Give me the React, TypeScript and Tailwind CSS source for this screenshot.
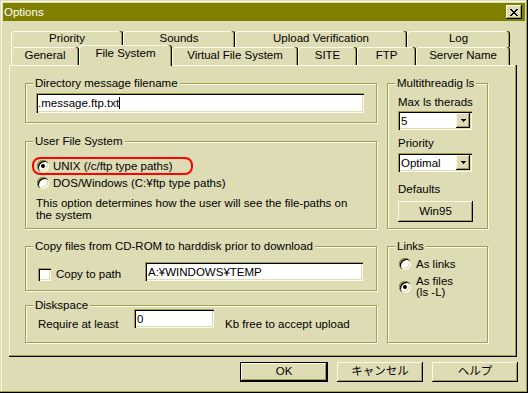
import React from "react";

const SUNKEN =
  "shadow-[inset_1px_1px_0_#a0a050,inset_2px_2px_0_#000,inset_-1px_-1px_0_#fafae6,inset_-2px_-2px_0_#dedcb4]";
const RAISED =
  "shadow-[inset_-1px_-1px_0_#000,inset_1px_1px_0_#fafae6,inset_-2px_-2px_0_#a0a050,inset_2px_2px_0_#dedcb4]";
const TAB =
  "bg-[#dedcb4] rounded-t-[3px] flex items-center justify-center shadow-[inset_-1px_0_0_#000,inset_-2px_0_0_#a0a050,inset_1px_1px_0_#fafae6]";

const Radio = ({ checked }: { checked?: boolean }) => (
  <span
    className={`flex items-center justify-center w-[12px] h-[12px] shrink-0 rounded-full bg-white ${SUNKEN}`}
  >
    {checked && <span className="w-[4px] h-[4px] rounded-full bg-black" />}
  </span>
);

const Checkbox = () => (
  <span className={`block w-[13px] h-[13px] shrink-0 bg-white ${SUNKEN}`} />
);

const Group = ({
  label,
  className,
  children,
}: {
  label: string;
  className: string;
  children?: React.ReactNode;
}) => (
  <fieldset
    className={`border border-[#a0a050] shadow-[inset_1px_1px_0_#fafae6,1px_1px_0_#fafae6] ${className}`}
  >
    <legend className="ml-[7px] px-[2px] leading-[15px] bg-[#dedcb4] whitespace-nowrap">
      {label}
    </legend>
    {children}
  </fieldset>
);

const Combo = ({ value }: { value: string }) => (
  <div
    className={`w-[74px] h-[19px] bg-white flex items-center justify-between pl-[3px] pr-[2px] ${SUNKEN}`}
  >
    <span className="leading-[14px]">{value}</span>
    <span
      className={`w-[14px] h-[15px] bg-[#dedcb4] flex items-center justify-center ${RAISED}`}
    >
      <svg width="5" height="3" viewBox="0 0 5 3" shapeRendering="crispEdges">
        <path d="M0 0h5v1H0z M1 1h3v1H1z M2 2h1v1H2z" fill="#000" />
      </svg>
    </span>
  </div>
);

export default function App() {
  return (
    <div className="w-[528px] h-[393px] bg-[#dedcb4] p-[3px] flex flex-col text-black text-[11.5px] font-['Liberation_Sans','Noto_Sans_CJK_JP',sans-serif] shadow-[inset_-1px_-1px_0_#000,inset_-2px_-2px_0_#a0a050,inset_1px_1px_0_#dedcb4,inset_2px_2px_0_#fafae6]">
      {/* Title bar */}
      <div className="h-[18px] bg-[#808000] flex items-center justify-between pl-[1px] pr-[3px]">
        <span className="text-white leading-[14px]">Options</span>
        <span
          className={`w-[16px] h-[14px] bg-[#dedcb4] flex items-center justify-center ${RAISED}`}
        >
          <svg width="8" height="7" viewBox="0 0 8 7" shapeRendering="crispEdges">
            <path
              d="M0 0h2v1H0z M6 0h2v1H6z M1 1h2v1H1z M5 1h2v1H5z M2 2h4v1H2z M3 3h2v1H3z M2 4h4v1H2z M1 5h2v1H1z M5 5h2v1H5z M0 6h2v1H0z M6 6h2v1H6z"
              fill="#000"
            />
          </svg>
        </span>
      </div>

      {/* Tabs */}
      <div className="mt-[10px] ml-[8px] w-[499px] h-[34px] flex flex-col">
        <div className="flex h-[16px]">
          <div className={`w-[112px] h-[16px] ${TAB}`}>Priority</div>
          <div className={`w-[112px] h-[16px] ${TAB}`}>Sounds</div>
          <div className={`w-[172px] h-[16px] ${TAB}`}>Upload Verification</div>
          <div className={`w-[103px] h-[16px] ${TAB}`}>Log</div>
        </div>
        <div className="flex h-[18px] items-start">
          <div className={`w-[68px] h-[18px] ${TAB}`}>General</div>
          <div className={`relative z-10 -mt-[2px] w-[93px] h-[21px] pb-[3px] ${TAB}`}>
            File System
          </div>
          <div className={`w-[126px] h-[18px] ${TAB}`}>Virtual File System</div>
          <div className={`w-[59px] h-[18px] ${TAB}`}>SITE</div>
          <div className={`w-[59px] h-[18px] ${TAB}`}>FTP</div>
          <div className={`w-[94px] h-[18px] ${TAB}`}>Server Name</div>
        </div>
      </div>

      {/* Panel */}
      <div className="ml-[6px] w-[508px] h-[292px] flex gap-[10px] pl-[16px] pt-[11px] shadow-[inset_-1px_-1px_0_#000,inset_-2px_-2px_0_#a0a050,inset_1px_1px_0_#fafae6]">
        {/* Left column */}
        <div className="flex flex-col w-[352px]">
          <Group label="Directory message filename" className="w-[352px] h-[47px]">
            <div className="pt-[2px] pl-[10px]">
              <div
                className={`w-[328px] h-[20px] bg-white flex items-center pl-[2px] ${SUNKEN}`}
              >
                <span className="leading-[14px]">.message.ftp.txt</span>
                <span className="w-[1px] h-[12px] bg-black" />
              </div>
            </div>
          </Group>

          <Group label="User File System" className="mt-[11px] w-[352px] h-[95px]">
            <div className="pt-[8px] pl-[6px]">
              <div className="w-[161px] h-[18px] border-2 border-[#ff0000] rounded-[8px] flex items-center pl-[3px] gap-[4px]">
                <Radio checked />
                <span className="leading-[14px] whitespace-nowrap">UNIX (/c/ftp type paths)</span>
              </div>
              <div className="mt-[1px] ml-[5px] h-[14px] flex items-center gap-[4px]">
                <Radio />
                <span className="leading-[14px] whitespace-nowrap">
                  DOS/Windows (C:¥ftp type paths)
                </span>
              </div>
            </div>
            <div className="mt-[7px] pl-[10px] leading-[12px] whitespace-nowrap">
              This option determines how the user will see the file-paths on
              <br />
              the system
            </div>
          </Group>

          <Group
            label="Copy files from CD-ROM to harddisk prior to download"
            className="mt-[10px] w-[352px] h-[52px]"
          >
            <div className="mt-[8px] pl-[12px] flex items-end">
              <Checkbox />
              <span className="ml-[5px] w-[89px] leading-[14px] whitespace-nowrap">
                Copy to path
              </span>
              <div
                className={`w-[218px] h-[19px] bg-white flex items-center pl-[3px] ${SUNKEN}`}
              >
                <span className="leading-[14px]">A:¥WINDOWS¥TEMP</span>
              </div>
            </div>
          </Group>

          <Group label="Diskspace" className="mt-[7px] w-[352px] h-[45px]">
            <div className="-mt-[4px] pl-[12px] flex items-end">
              <span className="w-[96px] leading-[14px] -mb-[3px] whitespace-nowrap">
                Require at least
              </span>
              <div
                className={`w-[80px] h-[19px] bg-white flex items-center pl-[3px] ${SUNKEN}`}
              >
                <span className="leading-[14px]">0</span>
              </div>
              <span className="ml-[11px] leading-[14px] -mb-[3px] whitespace-nowrap">
                Kb free to accept upload
              </span>
            </div>
          </Group>
        </div>

        {/* Right column */}
        <div className="flex flex-col w-[101px]">
          <Group label="Multithreadig ls" className="w-[101px] h-[153px]">
            <div className="pl-[10px] flex flex-col">
              <span className="mt-[4px] leading-[14px] whitespace-nowrap">Max ls therads</span>
              <div className="mt-[2px]">
                <Combo value="5" />
              </div>
              <span className="mt-[6px] leading-[14px]">Priority</span>
              <div className="mt-[3px]">
                <Combo value="Optimal" />
              </div>
              <span className="mt-[10px] leading-[14px]">Defaults</span>
              <div
                className={`mt-[5px] w-[75px] h-[21px] bg-[#dedcb4] flex items-center justify-center ${RAISED}`}
              >
                Win95
              </div>
            </div>
          </Group>

          <Group label="Links" className="mt-[10px] w-[101px] h-[104px]">
            <div className="pl-[11px] flex flex-col">
              <div className="mt-[3px] h-[14px] flex items-center gap-[5px]">
                <Radio />
                <span className="leading-[14px] whitespace-nowrap">As links</span>
              </div>
              <div className="mt-[5px] flex items-center gap-[5px]">
                <Radio checked />
                <span className="leading-[11px] whitespace-nowrap">
                  As files
                  <br />
                  (ls -L)
                </span>
              </div>
            </div>
          </Group>
        </div>
      </div>

      {/* Buttons */}
      <div className="mt-[5px] ml-[237px] flex gap-[9px]">
        <div
          className={`w-[88px] h-[20px] border border-black bg-[#dedcb4] flex items-center justify-center ${RAISED}`}
        >
          OK
        </div>
        <div
          className={`w-[86px] h-[20px] bg-[#dedcb4] flex items-center justify-center ${RAISED}`}
        >
          キャンセル
        </div>
        <div
          className={`w-[86px] h-[20px] bg-[#dedcb4] flex items-center justify-center ${RAISED}`}
        >
          ヘルプ
        </div>
      </div>
    </div>
  );
}
